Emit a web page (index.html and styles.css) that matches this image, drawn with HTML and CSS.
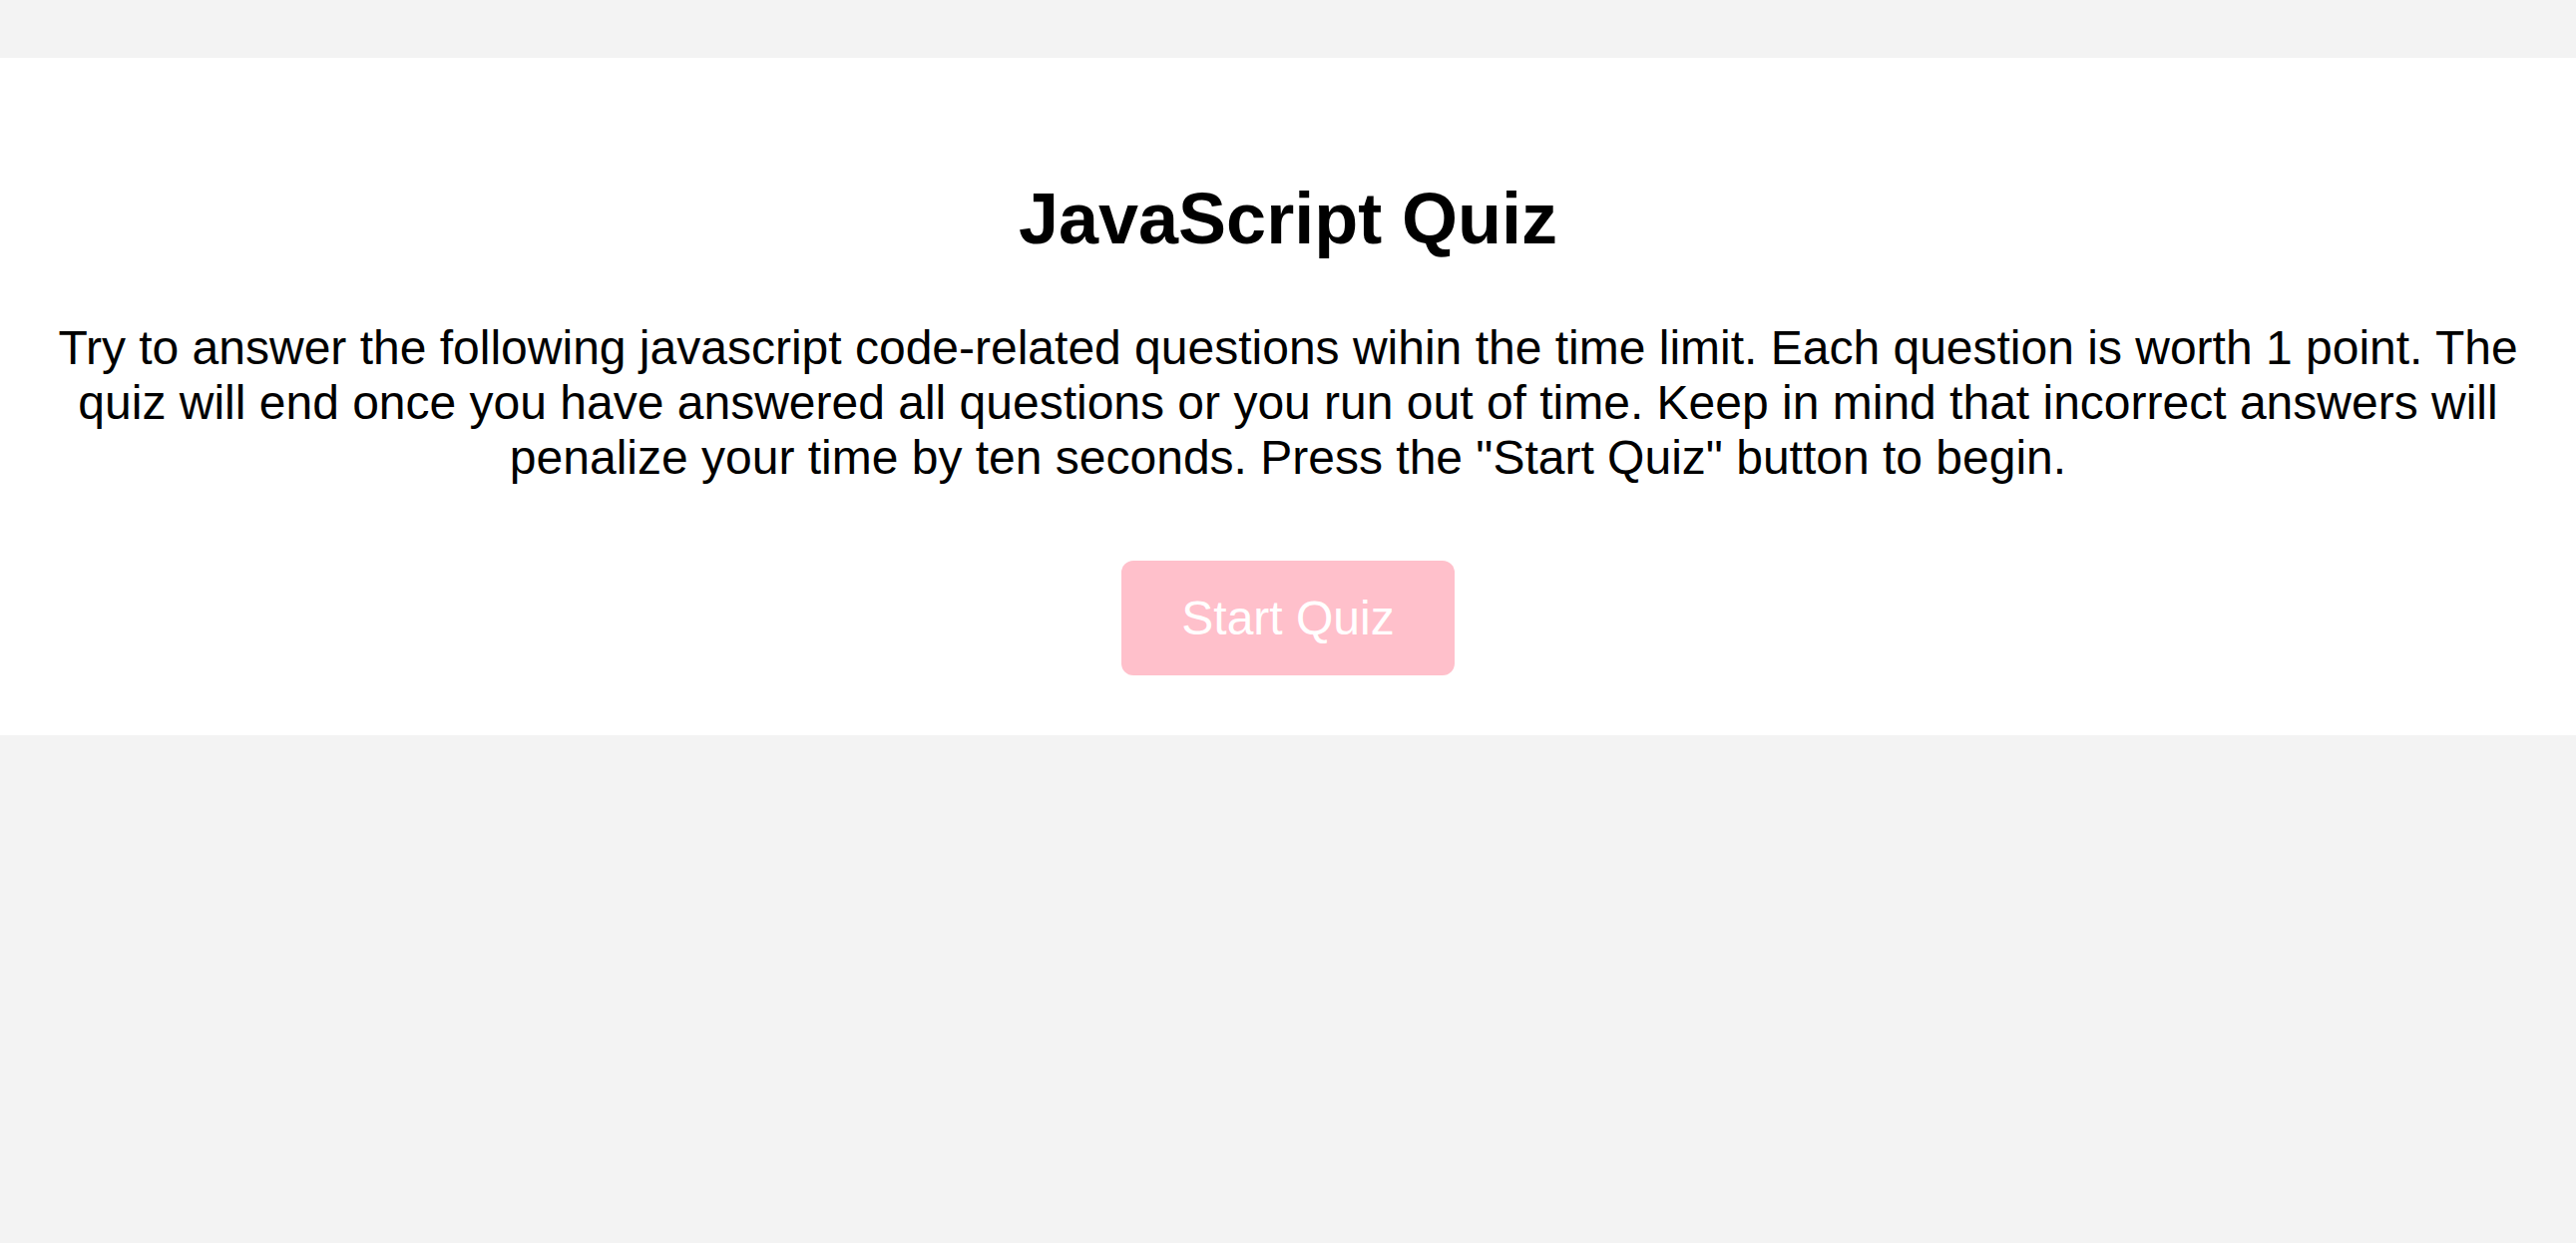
FILE: index.html
```html
<!DOCTYPE html>
<html lang="en">
<head>
<meta charset="utf-8">
<title>JavaScript Quiz</title>
<link rel="stylesheet" href="styles.css">
</head>
<body>
<main class="intro">
  <h1 class="intro-title">JavaScript Quiz</h1>
  <p class="intro-text">Try to answer the following javascript code-related questions wihin the time limit. Each question is worth 1 point. The quiz will end once you have answered all questions or you run out of time. Keep in mind that incorrect answers will penalize your time by ten seconds. Press the "Start Quiz" button to begin.</p>
  <button class="start-btn" type="button">Start Quiz</button>
</main>
</body>
</html>
```
FILE: styles.css
```css
html, body {
  margin: 0;
  padding: 0;
}
body {
  background: #f3f3f3;
  font-family: "Liberation Sans", Arial, sans-serif;
  color: #000;
  padding-top: 58px;
  min-height: 100vh;
  box-sizing: border-box;
}
.intro {
  background: #fff;
  text-align: center;
  padding: 120px 20px 60px;
}
.intro-title {
  font-size: 72px;
  font-weight: bold;
  margin: 0 0 61px;
  line-height: normal;
}
.intro-text {
  font-size: 48px;
  margin: 0 0 76px;
  line-height: normal;
}
.start-btn {
  font-family: "Liberation Sans", Arial, sans-serif;
  font-size: 48px;
  line-height: normal;
  color: #fff;
  background: #ffc0cb;
  border: none;
  border-radius: 12px;
  padding: 30px 60px;
  cursor: pointer;
  display: inline-block;
  vertical-align: top;
}
```
